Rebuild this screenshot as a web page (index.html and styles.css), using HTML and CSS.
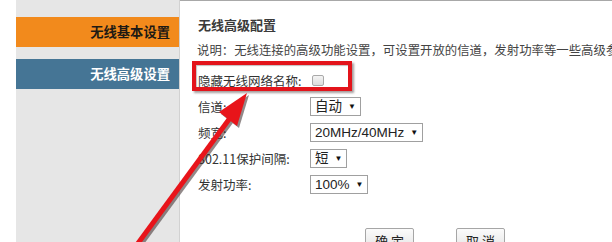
FILE: index.html
```html
<!DOCTYPE html>
<html lang="zh">
<head>
<meta charset="utf-8">
<title>无线高级配置</title>
<link rel="stylesheet" href="styles.css">
</head>
<body>
<div class="page">
  <div class="gutter"></div>
  <nav class="sidebar">
    <div class="nav-item nav-orange">无线基本设置</div>
    <div class="nav-item nav-blue">无线高级设置</div>
  </nav>
  <main class="content">
    <h1 class="title">无线高级配置</h1>
    <p class="desc">说明：无线连接的高级功能设置，可设置开放的信道，发射功率等一些高级参数</p>
    <div class="form">
      <div class="row"><span class="label">隐藏无线网络名称:</span><span class="checkbox"></span></div>
      <div class="row"><span class="label">信道:</span><span class="select">自动<i class="arrow">▼</i></span></div>
      <div class="row"><span class="label">频宽:</span><span class="select">20MHz/40MHz<i class="arrow">▼</i></span></div>
      <div class="row"><span class="label">802.11保护间隔:</span><span class="select">短<i class="arrow">▼</i></span></div>
      <div class="row"><span class="label">发射功率:</span><span class="select">100%<i class="arrow">▼</i></span></div>
    </div>
    <div class="buttons">
      <button class="btn">确 定</button>
      <button class="btn">取 消</button>
    </div>
  </main>
</div>
<div class="highlight"></div>
<svg class="annot" width="612" height="242" viewBox="0 0 612 242">
  <g transform="translate(2,2)" fill="#3a2a2a" opacity="0.55">
    <line x1="136" y1="246" x2="230" y2="118" stroke="#3a2a2a" stroke-width="5"/>
    <polygon points="247,93 237,126 219,112"/>
  </g>
  <line x1="136" y1="246" x2="230" y2="118" stroke="#e8141a" stroke-width="5"/>
  <polygon points="247,93 237,126 219,112" fill="#e8141a"/>
</svg>
</body>
</html>
```
FILE: styles.css
```css
html, body {
  margin: 0;
  padding: 0;
  background: #fff;
}
body {
  width: 612px;
  height: 242px;
  overflow: hidden;
  position: relative;
  font-family: "Liberation Sans", "Noto Sans CJK SC", sans-serif;
  color: #333;
}
.page {
  display: flex;
  height: 242px;
}
.gutter {
  width: 16px;
  flex: none;
  background: #fff;
}
.sidebar {
  width: 164px;
  flex: none;
  background: #e6e6e6;
  border-right: 1px solid #d2d2d2;
  padding-top: 17px;
  box-sizing: border-box;
  display: flex;
  flex-direction: column;
  gap: 12px;
}
.nav-item {
  height: 30px;
  line-height: 30px;
  text-align: right;
  padding-right: 9px;
  font-size: 13.3px;
  font-weight: bold;
  font-family: "Noto Sans CJK SC", sans-serif;
}
.nav-orange {
  background: #f28a1c;
  color: #1e1a14;
}
.nav-blue {
  background: #457595;
  color: #fff;
}
.content {
  flex: 1;
  border-top: 1px solid #a8a8a8;
  padding: 16px 0 0 18px;
  white-space: nowrap;
  overflow: hidden;
  font-family: "Noto Sans CJK SC", sans-serif;
}
.title {
  margin: 0;
  font-size: 13px;
  line-height: 16px;
  font-weight: bold;
  color: #3a3a3a;
}
.desc {
  margin: 9px 0 0 -1px;
  font-size: 12.4px;
  line-height: 16px;
  color: #444;
}
.form {
  margin-top: 9px;
  display: flex;
  flex-direction: column;
}
.row {
  height: 26px;
  display: flex;
  align-items: center;
  font-size: 12.5px;
  color: #333;
}
.label {
  width: 112px;
  flex: none;
}
.checkbox {
  width: 10px;
  height: 9px;
  margin-left: 2px;
  border: 1px solid #a9a9a9;
  border-radius: 2px;
  background: linear-gradient(#f4f4f4, #dcdcdc);
}
.select {
  height: 17px;
  line-height: 17px;
  border: 1px solid #a0a0a0;
  padding: 0 4px 0 4px;
  font-family: "Liberation Sans", "Noto Sans CJK SC", sans-serif;
  font-size: 13.5px;
  color: #222;
  display: flex;
  align-items: center;
}
.arrow {
  font-style: normal;
  font-size: 8px;
  margin-left: 6px;
  color: #111;
}
.buttons {
  margin: 31px 0 0 167px;
  display: flex;
  gap: 42px;
}
.btn {
  width: 49px;
  height: 24px;
  border: 1px solid #a6a6a6;
  border-radius: 2px;
  background: linear-gradient(#fbfbfb, #e3e3e3);
  font-family: "Noto Sans CJK SC", sans-serif;
  font-size: 13px;
  color: #222;
  padding: 0;
}
.highlight {
  position: absolute;
  left: 192px;
  top: 61px;
  width: 152px;
  height: 22px;
  border: 4px solid #e3141b;
  box-shadow: 2px 2px 2px rgba(60, 40, 40, 0.45), inset 1px 1px 1px rgba(60, 40, 40, 0.3);
}
.annot {
  position: absolute;
  left: 0;
  top: 0;
  pointer-events: none;
}
```
